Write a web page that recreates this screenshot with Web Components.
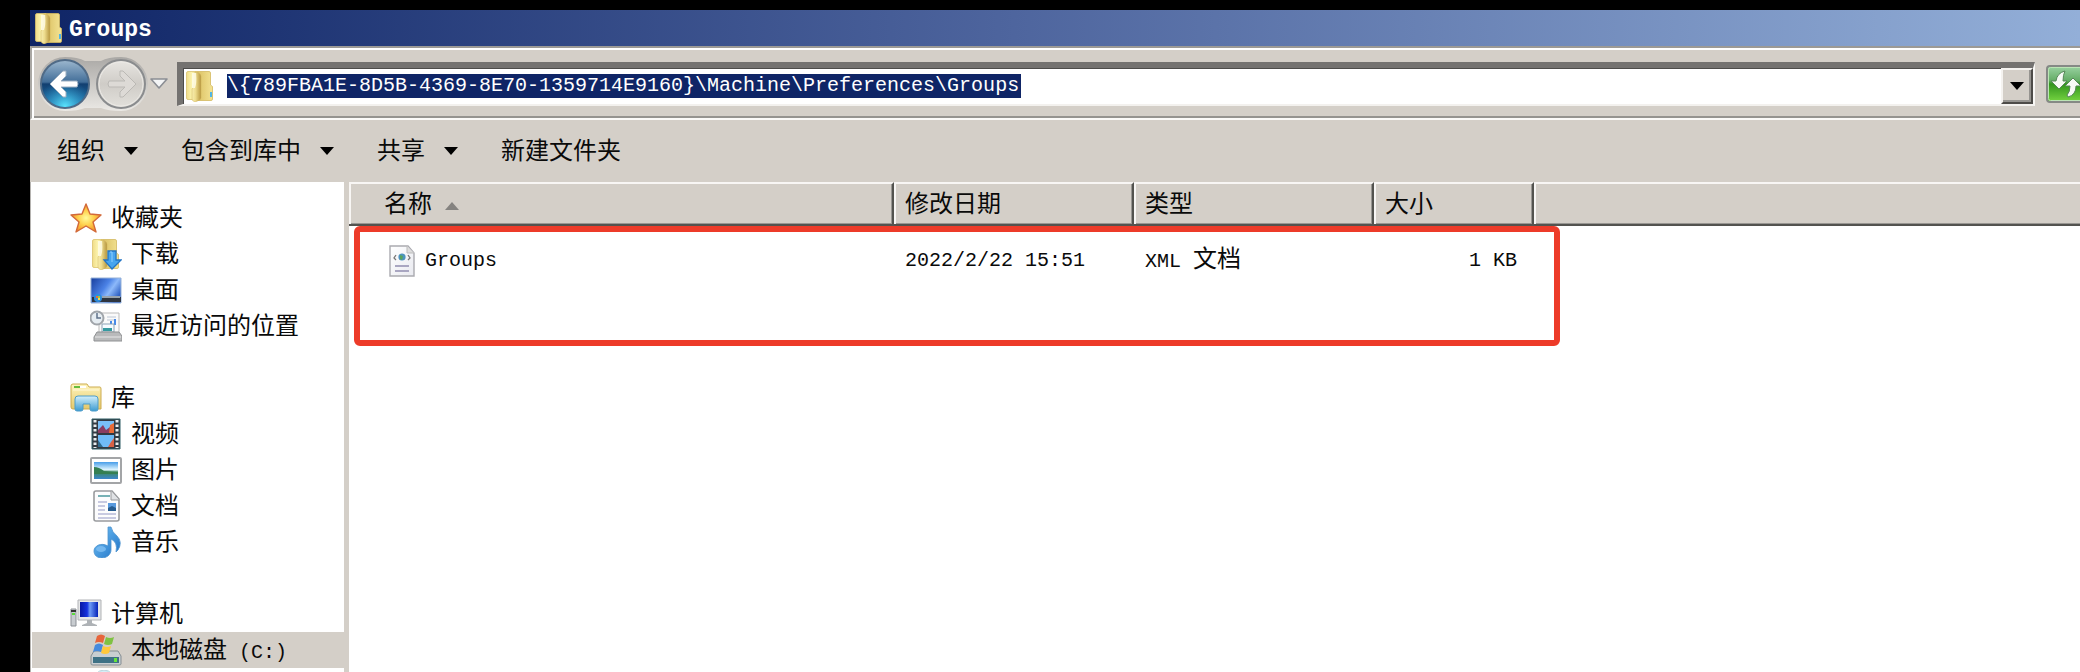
<!DOCTYPE html>
<html lang="zh-CN">
<head>
<meta charset="utf-8">
<title>Groups</title>
<style>
  html, body { margin: 0; height: 100%; background: #000; overflow: hidden; }
  body {
    --face: #d4cfc8; --navy: #0f2566; --mono: 20px;
    font: 24px/36px "Liberation Mono", "Noto Sans CJK SC", monospace;
    color: #0a0a0a;
  }
</style>
</head>
<body>
<explorer-window>
  <title-bar slot="title">Groups</title-bar>
  <nav-bar slot="nav" path="\{789FBA1E-8D5B-4369-8E70-1359714E9160}\Machine\Preferences\Groups"></nav-bar>
  <command-bar slot="commands">
    <command-item menu>组织</command-item>
    <command-item menu>包含到库中</command-item>
    <command-item menu>共享</command-item>
    <command-item>新建文件夹</command-item>
  </command-bar>
  <side-tree slot="tree">
    <tree-group>
      <tree-item icon="star">收藏夹</tree-item>
      <tree-item child icon="download">下载</tree-item>
      <tree-item child icon="desktop">桌面</tree-item>
      <tree-item child icon="recent">最近访问的位置</tree-item>
    </tree-group>
    <tree-group>
      <tree-item icon="library">库</tree-item>
      <tree-item child icon="video">视频</tree-item>
      <tree-item child icon="picture">图片</tree-item>
      <tree-item child icon="document">文档</tree-item>
      <tree-item child icon="music">音乐</tree-item>
    </tree-group>
    <tree-group>
      <tree-item icon="computer">计算机</tree-item>
      <tree-item child selected icon="disk" suffix="&nbsp;(C:)">本地磁盘</tree-item>
      <tree-item child icon="disc"></tree-item>
    </tree-group>
  </side-tree>
  <file-list slot="files"></file-list>
</explorer-window>

<script>
const define = (name, html, setup) => {
  const template = document.createElement('template');
  template.innerHTML = html;
  customElements.define(name, class extends HTMLElement {
    static observedAttributes = ['name'];
    constructor() {
      super();
      this.attachShadow({ mode: 'open' }).append(template.content.cloneNode(true));
    }
    connectedCallback() { if (setup) setup(this, this.shadowRoot); }
    attributeChangedCallback() { if (setup) setup(this, this.shadowRoot); }
  });
};

const folder = `
  <defs><linearGradient id="a" x2="1"><stop stop-color="#f0dc87"/><stop offset=".5" stop-color="#fbf3ae"/><stop offset="1" stop-color="#ecd888"/></linearGradient>
  <linearGradient id="b" x2="1"><stop stop-color="#c5a64b"/><stop offset=".25" stop-color="#dfc66a"/><stop offset="1" stop-color="#f3e394"/></linearGradient>
  <linearGradient id="c" x2="1"><stop stop-color="#f8eeb0"/><stop offset=".4" stop-color="#eddb8c"/><stop offset="1" stop-color="#b6963e"/></linearGradient></defs>
  <path d="M10 1.500h14q1.500 0 1.500 1.500v12l2 1.500V29q0 1.500-1.500 1.500H10z" fill="url(#b)" stroke="#d3b961" stroke-width=".8"/>
  <path d="M3 1.500h9v28H3Q1.500 29.500 1.500 28V3Q1.500 1.500 3 1.500z" fill="url(#a)" stroke="#dbc36d" stroke-width=".8"/>
  <path d="M10 2q6 1 6 4v22q0 2-6 4-3-1-3-3V19q4-4 3-17z" fill="url(#c)" stroke="#cfb35b" stroke-width=".5"/>
  <path d="M7 3h4q1 10-1 15H7z" fill="#fffde6" opacity=".85"/>`;

const icons = {
  folder: folder + `<path d="M26 22v5" stroke="#50b5e6" stroke-width="2"/>`,
  star: `<defs><radialGradient id="g"><stop stop-color="#fffb9a"/><stop offset=".5" stop-color="#ffd24f"/><stop offset="1" stop-color="#f39a2a"/></radialGradient></defs>
    <path d="M16 2l4 10 11 1-8 7 3 10-10-6-10 6 3-10-8-7 11-1z" fill="url(#g)" stroke="#d2693a" stroke-width="1.4" stroke-linejoin="round"/>`,
  download: `<g transform="translate(1 0)">${folder}</g>` + `<path d="M18 13h8v9h5l-9 9-8-9h4z" fill="#47a5ee" stroke="#2374c4" stroke-width="1.3"/><path d="M20 14h2v10" fill="none" stroke="#8fd0ff"/>`,
  desktop: `<defs><linearGradient id="g" x2="1" y2=".6"><stop stop-color="#173d9c"/><stop offset=".5" stop-color="#4b82e6"/><stop offset=".7" stop-color="#8db9fa"/><stop offset="1" stop-color="#2c5ec2"/></linearGradient></defs>
    <path d="M1 4h30v25H1z" fill="url(#g)" stroke="#96b1d7"/><path d="M2 23h29v5H2z" fill="#2e3540"/><path d="M10 22h20v2H10z" fill="#98a3ae"/>
    <circle cx="8" cy="24" r="4" fill="#2c8dde"/><path d="M6 22h2v2H6z" fill="#f06b38"/><path d="M8 22h2v2H8z" fill="#8cd04a"/><path d="M8 24h2v2H8z" fill="#ffda48"/>`,
  recent: `<path d="M9 3h20v22H9z" fill="#fafafa" stroke="#bbb"/><path d="M17 7h9M17 10h9" stroke="#bcc6d4"/><path d="M20 11h2v4h-2zM24 9h2v6h-2z" fill="#478ae8"/>
    <path d="M12 14h12v8H12z" fill="#f5fbff" stroke="#8ca2b5"/><path d="M13 18h9v3h-9z" fill="#359aa0"/>
    <path d="M7 22h22l3 4v5H4v-4z" fill="#b9babb" stroke="#8f9193"/><path d="M5 27h26" stroke="#e7e7e7"/>
    <circle cx="7" cy="8" r="6.500" fill="#e6edf2" stroke="#a0a5aa" stroke-width="2"/><path d="M7 3v5h4" fill="none" stroke="#60738c" stroke-width="1.5"/>`,
  library: `<defs><linearGradient id="g" y2="1" x2="0"><stop stop-color="#fff5bd"/><stop offset="1" stop-color="#e4c86b"/></linearGradient><linearGradient id="h" y2="1" x2="0"><stop stop-color="#d3f0fc"/><stop offset="1" stop-color="#3c9bd1"/></linearGradient></defs>
    <path d="M1 4q0-2 2-2h14l2 3h11q1 0 1 2v20H3q-2 0-2-2z" fill="url(#g)" stroke="#cdac50"/><path d="M4 4h6v2H4z" fill="#65bd3d"/><path d="M10 4h6v2h-6z" fill="#fff"/><path d="M3 8h26" stroke="#fff8d8"/>
    <path d="M5 17q0-3 3-3h17q3 0 3 3v10q0 2-2 2h-4q-2 0-2-2v-5h-7v5q0 2-2 2H7q-2 0-2-2z" fill="url(#h)" stroke="#4d9cc9"/>`,
  video: `<path d="M2 1h28v30H2z" fill="#333a43" stroke="#315f66"/><path d="M8 3h16v12H8z" fill="#79bff8"/><path d="M8 12l5-5 3 5 4-3 4-3v9H8z" fill="#8b3d62"/><path d="M20 7l4-2v10h-5z" fill="#e96b36"/>
    <path d="M8 17h16v12H8z" fill="#70bbf7"/><path d="M8 22l5 7H8z" fill="#306b8f"/><path d="M24 20v9h-6l3-5z" fill="#d76145"/>
    <path d="M5 2v28M27 2v28" stroke="#e8edf0" stroke-width="3" stroke-dasharray="2.5 2"/>`,
  picture: `<defs><linearGradient id="g" y2="1" x2="0"><stop stop-color="#489ee9"/><stop offset=".45" stop-color="#dff5ff"/><stop offset=".6" stop-color="#3a875f"/><stop offset="1" stop-color="#3b86ce"/></linearGradient></defs>
    <rect x="1" y="4" width="30" height="25" rx="1" fill="#fff" stroke="#a3a5a7" stroke-width="2"/><path d="M4 8h24v17H4z" fill="url(#g)"/><path d="M4 13q5 0 10 4l14 1v2H4z" fill="#347f52"/>`,
  document: `<path d="M6 1h16l7 8v20q0 2-2 2H6q-2 0-2-2V3q0-2 2-2z" fill="#fcfcfd" stroke="#999b9e" stroke-width="1.6"/><path d="M21 1v9h8" fill="#e0e2e5" stroke="#999b9e"/>
    <path d="M8 6h12" stroke="#4b989c" stroke-width="1.5"/><path d="M8 12h9M8 16h7M8 20h7M8 24h18M8 28h18" stroke="#b7b9d7" stroke-width="1.5"/><path d="M18 13h8v8h-8z" fill="#599ade"/><path d="M18 18l4-2 4 2v3h-8z" fill="#275c8f"/>`,
  music: `<defs><linearGradient id="g" x2="1" y2="1"><stop stop-color="#75c5f8"/><stop offset="1" stop-color="#1d70c5"/></linearGradient></defs>
    <path d="M18 1h3q1 5 6 9 6 6 1 14l-2 2q2-10-5-13v11c0 5-5 8-9 8-5 0-8-3-8-7 0-5 7-9 14-5z" fill="url(#g)" stroke="#4b92ce" stroke-width=".8"/><ellipse cx="11" cy="23" rx="5" ry="3" fill="#75b8ef"/>`,
  computer: `<defs><linearGradient id="g" x2="1"><stop stop-color="#0717a2"/><stop offset=".4" stop-color="#1532df"/><stop offset=".55" stop-color="#6e9cf7"/><stop offset="1" stop-color="#0724b9"/></linearGradient></defs>
    <path d="M1 11h5v17H1z" fill="#c8ccd0" stroke="#8b8f95"/><path d="M1 12h5v2H1z" fill="#333"/><path d="M2 15h3v2H2z" fill="#5bdb3b"/>
    <path d="M8 2h23v20H8z" fill="#e6e7e8" stroke="#b1b3b6"/><path d="M10 4h18v15H10z" fill="url(#g)"/><path d="M17 22h5v3l5 2v1H12v-1l5-2z" fill="#aeb2b6"/>`,
  disk: `<path d="M4 17h24l3 5v8q0 1-2 1H3q-2 0-2-1v-8z" fill="#c8ced1" stroke="#858e93"/><path d="M3 23h26v6H3z" fill="#3e7185"/><path d="M24 24h3v4h-3z" fill="#65e33c"/>
    <path d="M7 2q4-3 8 0l-2 7q-4-2-8 0z" fill="#e7653b"/><path d="M16 3q4 2 8 0l-2 7q-4 2-8 0z" fill="#7fc242"/><path d="M5 11q4-3 8 0l-2 7q-4-2-8 0z" fill="#478bdd"/><path d="M13 12q4 2 8 0l-2 7q-4 2-8 0z" fill="#ffc83a"/>`,
  disc: `<ellipse cx="14" cy="15" rx="12" ry="15" fill="#d4eef6" stroke="#bcd6de"/>`,
  xml: `<defs><linearGradient id="g" x2="1" y2="1"><stop stop-color="#fff"/><stop offset="1" stop-color="#e9eaf0"/></linearGradient></defs>
    <path d="M4 1h18l6 7v23H4z" fill="url(#g)" stroke="#aaaab0" stroke-width="1.4"/><path d="M21 1v7h7" fill="#ddd" stroke="#bbb"/><circle cx="16" cy="12" r="3.600" fill="#4c93bd"/><path d="M14 10l3 1-1 4-2-1z" fill="#59a45b"/>
    <path d="M10 10l-2 3 2 2M22 10l2 3-2 2" fill="none" stroke="#777" stroke-width="1.3"/><path d="M9 21h14M9 26h14" stroke="#a9a6c1" stroke-width="2"/>`
};

define('shell-icon', `<style>:host{display:block;flex:none;width:32px;height:32px}svg{display:block;width:100%;height:100%}</style>
  <svg viewBox="0 0 32 32" aria-hidden="true"></svg>`,
  (el, root) => { root.querySelector('svg').innerHTML = icons[el.getAttribute('name')] || ''; });

define('explorer-window', `<style>
  :host{display:flex;flex-direction:column;box-sizing:border-box;height:100vh;padding:10px 0 0 30px}
  .body{flex:1;min-height:0;display:grid;grid-template-columns:314px minmax(0,1fr);column-gap:5px;background:var(--face)}
  </style><slot name="title"></slot><slot name="nav"></slot><slot name="commands"></slot>
  <div class="body"><slot name="tree"></slot><slot name="files"></slot></div>`);

define('title-bar', `<style>
  :host{display:flex;align-items:center;gap:3px;height:36px;padding-left:4px;background:linear-gradient(90deg,var(--navy),#4e659e 48%,#93afd8);color:#fff;font-size:23px;font-weight:700}
  h1{margin:0;padding-top:4px;font:inherit}
  </style><shell-icon name="folder"></shell-icon><h1><slot></slot></h1>`);

define('nav-bar', `<style>
  :host{display:flex;align-items:center;box-sizing:border-box;height:74px;background:var(--face);
    border-top:2px solid #9c9a96;border-bottom:2px solid #fbfaf8;border-left:2px solid #aaa8a4;
    box-shadow:inset 0 2px #fff,inset 2px 0 #fff,inset 0 -2px #95938f;padding:2px 0 0 5px}
  button{padding:0;border:0;background:none;font:inherit;display:block;flex:none}
  svg{display:block}
  .travel{display:flex;flex:none;width:112px;height:56px;position:relative}
  .travel button{width:56px;height:56px;position:relative}
  .travel .plate{position:absolute;left:0;top:0}
  .recent{width:20px;margin:0 8px 0 0}
  .address{flex:1;min-width:0;display:flex;align-items:stretch;box-sizing:border-box;height:44px;background:#fff;
    border-style:solid;border-width:6px 2px 2px 6px;border-color:#747270 #f8f7f4 #f3f1ee #747270;box-shadow:inset 1px 1px #4d4c4a}
  .address shell-icon{margin:2px 10px 0 2px}
  input{box-sizing:border-box;flex:none;width:794px;height:24px;margin:6px 0 0 0;padding:0;border:0;outline:0;background:var(--navy);color:#fff;font:var(--mono)/24px "Liberation Mono",monospace}
  .drop{margin-left:auto;width:32px;display:grid;place-items:center;background:var(--face);border:2px solid;border-color:#f5f3f0 #4d4b48 #4d4b48 #f5f3f0;box-shadow:inset -2px -2px #969490}
  .refresh{width:34px;height:38px;margin-left:11px;overflow:hidden}
  </style>
  <div class="travel">
    <svg class="plate" width="112" height="56" viewBox="0 0 112 56" aria-hidden="true"><defs><linearGradient id="p" x2="0" y2="1"><stop stop-color="#aaa8a5"/><stop offset="1" stop-color="#ebe9e5"/></linearGradient></defs>
      <path d="M28 1q13 0 20 4h16q7-4 20-4a27 27 0 0 1 0 54q-13 0-20-3H48q-7 3-20 3a27 27 0 0 1 0-54z" fill="url(#p)"/></svg>
    <button aria-label="后退"><svg width="56" height="56" viewBox="0 0 56 56"><defs>
      <linearGradient id="r" x2="0" y2="1"><stop stop-color="#9db8cf"/><stop offset=".46" stop-color="#426e99"/><stop offset=".5" stop-color="#123f70"/><stop offset="1" stop-color="#247eb4"/></linearGradient>
      <radialGradient id="s" cx=".5" cy="1" r=".6"><stop stop-color="#5ce8ff"/><stop offset="1" stop-color="#2994d3" stop-opacity="0"/></radialGradient></defs>
      <circle cx="28" cy="28" r="24" fill="url(#r)" stroke="#506b87" stroke-width="2"/><circle cx="28" cy="28" r="23" fill="url(#s)"/>
      <path d="M13 28l13-13h3v5l-5 5h16q2 3 0 6H24l5 5v5h-3z" fill="#fff" stroke="#9cafc1"/></svg></button>
    <button aria-label="前进" disabled><svg width="56" height="56" viewBox="0 0 56 56"><defs>
      <linearGradient id="t" x2="0" y2="1"><stop stop-color="#e8e6e2"/><stop offset=".5" stop-color="#cfccc7"/><stop offset="1" stop-color="#e3e1dc"/></linearGradient></defs>
      <circle cx="28" cy="28" r="24" fill="url(#t)" stroke="#8a8c8e" stroke-width="2"/><circle cx="28" cy="28" r="22" fill="none" stroke="#eceae6"/>
      <path d="M43 28L30 15h-3v5l5 5H16q-2 3 0 6h16l-5 5v5h3z" fill="#dddad6" stroke="#bbb9b5"/></svg></button>
  </div>
  <button class="recent" aria-label="最近的位置"><svg width="20" height="14" viewBox="0 0 20 14"><path d="M2 2h16l-8 9z" fill="#f4f5f6" stroke="#8b8e94" stroke-width="1.6" stroke-linejoin="round"/></svg></button>
  <div class="address">
    <shell-icon name="folder"></shell-icon><input aria-label="地址" spellcheck="false">
    <button class="drop" aria-label="显示历史记录"><svg width="14" height="8" viewBox="0 0 14 8"><path d="M0 0h14L7 8z"/></svg></button>
  </div>
  <button class="refresh" aria-label="刷新"><svg width="40" height="38" viewBox="0 0 40 38"><defs><linearGradient id="v" x2="0" y2="1"><stop stop-color="#9bd3a3"/><stop offset=".4" stop-color="#65ad67"/><stop offset=".5" stop-color="#32941e"/><stop offset="1" stop-color="#78d642"/></linearGradient></defs>
    <rect x="1" y="1" width="50" height="36" rx="3" fill="url(#v)" stroke="#858985" stroke-width="2"/><rect x="2.500" y="2.500" width="46" height="33" rx="2" fill="none" stroke="#bce4b5"/>
    <path d="M19 6q-8 2-9 10H5l8 8 8-8h-4q0-6 2-10z" fill="#f6faf5" stroke="#568758"/><path d="M22 32q8-2 8-11h5l-8-8-8 8h5q0 6-3 9z" fill="#f6faf5" stroke="#568758"/></svg></button>`,
  (el, root) => { root.querySelector('input').value = el.getAttribute('path'); });

define('command-bar', `<style>:host{display:flex;align-items:center;gap:43px;height:62px;padding-left:27px;background:var(--face)}</style><slot></slot>`);

define('command-item', `<style>:host{display:block}
  button{display:flex;align-items:center;gap:19px;padding:0;border:0;background:none;font:inherit;color:inherit}
  span{padding-top:4px}
  svg{display:none}:host([menu]) svg{display:block}</style>
  <button><span><slot></slot></span><svg width="14" height="8" viewBox="0 0 14 8" aria-hidden="true"><path d="M0 0h14L7 8z"/></svg></button>`);

define('side-tree', `<style>:host{display:flex;flex-direction:column;gap:36px;min-height:0;overflow:hidden;padding-top:18px;background:#fff;border-left:1px solid #b5b3b0}</style><slot></slot>`);
define('tree-group', `<style>:host{display:block;flex:none}</style><slot></slot>`);
define('tree-item', `<style>:host{display:block;height:36px}
  a{display:flex;align-items:center;gap:9px;height:36px;margin-left:1px;padding-left:38px;color:inherit;text-decoration:none}
  :host([child]) a{padding-left:58px}
  :host([selected]) a{background:var(--face)}
  .label{white-space:pre;padding-top:4px}small{font-size:var(--mono)}</style>
  <a href="#"><shell-icon></shell-icon><span class="label"><slot></slot><small></small></span></a>`,
  (el, root) => {
    root.querySelector('shell-icon').setAttribute('name', el.getAttribute('icon'));
    root.querySelector('small').textContent = el.getAttribute('suffix') || '';
  });

define('file-list', `<style>
  :host{display:block;position:relative;background:#fff;min-width:0}
  table{width:100%;table-layout:fixed;border-collapse:separate;border-spacing:0}
  .name{width:545px}.date,.type{width:240px}.size{width:160px}
  th,td{box-sizing:border-box;padding:0 0 0 11px;text-align:left;font-weight:400;white-space:nowrap}
  th{height:44px;padding-top:4px;background:var(--face);border:solid;border-width:2px 2px 2px 0;border-color:#f8f6f4 #53534f #53534f;box-shadow:inset 2px 0 #f8f6f4,inset -1px -1px #989692}
  th:first-child{padding-left:35px}
  th:last-child{border-right:0;box-shadow:inset 2px 0 #f8f6f4,inset 0 -1px #989692}
  .sort{display:flex;align-items:center;gap:13px}
  td{height:70px}td:first-child{padding-left:37px}
  td:nth-child(4){text-align:right;padding:0 17px 0 0}
  .file{display:flex;align-items:center;gap:7px}
  .latin{font-size:var(--mono)}
  .mark{position:absolute;left:5px;top:44px;width:1206px;height:120px;box-sizing:border-box;border:6px solid #ed3b29;border-radius:6px;pointer-events:none}
  </style>
  <table><colgroup><col class="name"><col class="date"><col class="type"><col class="size"><col></colgroup>
  <thead><tr><th scope="col"><span class="sort">名称<svg width="14" height="8" viewBox="0 0 14 8" aria-hidden="true"><path d="M0 8h14L7 0z" fill="#858380"/></svg></span></th>
    <th scope="col">修改日期</th><th scope="col">类型</th><th scope="col">大小</th><th></th></tr></thead>
  <tbody><tr><td><span class="file"><shell-icon name="xml"></shell-icon><span class="latin">Groups</span></span></td>
    <td class="latin">2022/2/22 15:51</td><td><span class="latin">XML </span>文档</td><td class="latin">1 KB</td><td></td></tr></tbody></table>
  <div class="mark"></div>`);
</script>
</body>
</html>
